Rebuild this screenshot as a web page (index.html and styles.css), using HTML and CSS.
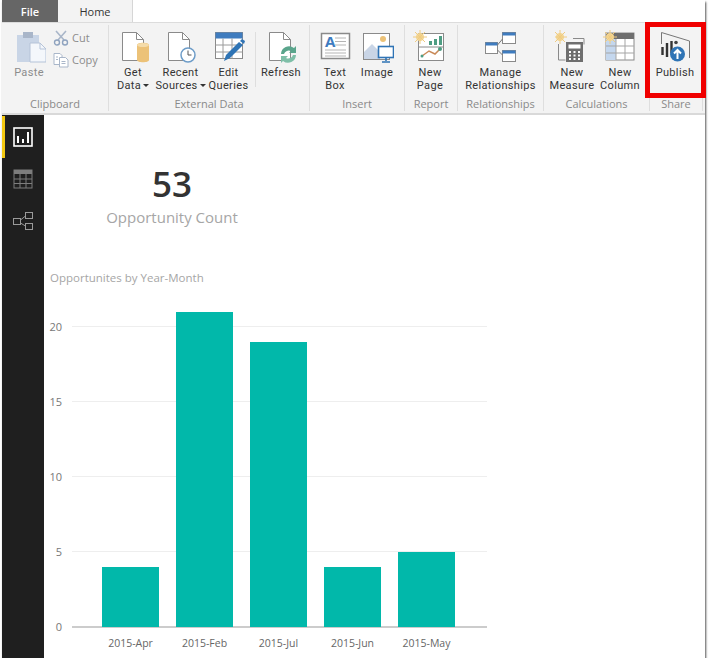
FILE: index.html
```html
<!DOCTYPE html>
<html lang="en">
<head>
  <meta charset="UTF-8" />
  <title>Power BI Desktop - Publish</title>
  <link rel="stylesheet" href="styles.css">
</head>
<body>
  <div class="window">
    <div class="tabs">
      <div class="tab tab-file">File</div>
      <div class="tab tab-home">Home</div>
    </div>

    <div class="ribbon">
      <div class="group group-clipboard">
        <div class="group-items">
          <div class="item item-paste disabled">
            <svg class="icon" viewBox="-4 -1 34 34">
              <rect x="1" y="4" width="22" height="27" fill="#c9d5e6"/>
              <rect x="7" y="1" width="10" height="6" fill="#a9b6c9"/>
              <path d="M14 12h10l6 6v13H14z" fill="#f4f7fb" stroke="#b5c3d8"/>
              <path d="M24 12v6h6" fill="none" stroke="#b5c3d8"/>
            </svg>
            <span class="label">Paste</span>
          </div>
          <div class="small-items">
            <div class="small-item disabled">
              <svg class="small-icon" viewBox="0 0 16 16">
                <path d="M3 1l8 9M13 1l-8 9" fill="none" stroke="#a9b6c9" stroke-width="1.6"/>
                <circle cx="4" cy="12.500" r="2.500" fill="none" stroke="#8fa3bf" stroke-width="1.4"/>
                <circle cx="12" cy="12.500" r="2.500" fill="none" stroke="#8fa3bf" stroke-width="1.4"/>
              </svg>
              <span>Cut</span>
            </div>
            <div class="small-item disabled">
              <svg class="small-icon" viewBox="0 0 16 16">
                <path d="M1 1.500h6l2 2v9H1z" fill="#fff" stroke="#a9b6c9"/>
                <path d="M6.500 5.500h6l2.500 2.500v7H6.500z" fill="#fff" stroke="#a9b6c9"/>
                <path d="M3 5h2M3 7.500h2M8.500 9.500h4M8.500 11.500h4" stroke="#a9b6c9"/>
              </svg>
              <span>Copy</span>
            </div>
          </div>
        </div>
        <div class="group-name">Clipboard</div>
      </div>

      <div class="group group-external">
        <div class="group-items">
          <div class="item item-getdata">
            <svg class="icon" viewBox="-2 0 34 34">
              <path d="M4.500 2.500h14l7 7v21h-21z" fill="#fff" stroke="#8a8a8a"/>
              <path d="M18.500 2.500v7h7" fill="none" stroke="#8a8a8a"/>
              <path d="M19 15c0-3 12-3 12 0v15c0 3-12 3-12 0z" fill="#ecc278"/>
              <ellipse cx="25" cy="15" rx="6" ry="2" fill="#f5dcaa"/>
            </svg>
            <span class="label">Get<br>Data<i class="caret"></i></span>
          </div>
          <div class="item item-recent">
            <svg class="icon" viewBox="-1 0 34 34">
              <path d="M3.500 2.500h14l7 7v21h-21z" fill="#fff" stroke="#8a8a8a"/>
              <path d="M17.500 2.500v7h7" fill="none" stroke="#8a8a8a"/>
              <circle cx="23" cy="25" r="7" fill="#fff" stroke="#6d9cc8" stroke-width="1.500"/>
              <path d="M23 20.500V25h3.500" fill="none" stroke="#555"/>
            </svg>
            <span class="label">Recent<br>Sources<i class="caret"></i></span>
          </div>
          <div class="item item-queries">
            <svg class="icon" viewBox="-1 0 34 34">
              <rect x="2.500" y="2.500" width="27" height="26" fill="#fff" stroke="#8a8a8a"/>
              <rect x="2.500" y="2.500" width="27" height="6" fill="#3f7cbf"/>
              <path d="M2.500 15h27M2.500 22h27M10 8.500v20M19 8.500v20" stroke="#9a9a9a"/>
              <path d="M11 31l2-6 13-13 4 3-13 13z" fill="#2f74b5"/>
              <path d="M27 11l2-2 3 2-1 3z" fill="#2f74b5"/>
            </svg>
            <span class="label">Edit<br>Queries</span>
          </div>
          <div class="mini-sep"></div>
          <div class="item item-refresh">
            <svg class="icon" viewBox="0 0 34 34">
              <path d="M5.500 2.500h14l7 7v21h-21z" fill="#fff" stroke="#8a8a8a"/>
              <path d="M19.500 2.500v7h7" fill="none" stroke="#8a8a8a"/>
              <path d="M17 24a8 8 0 0 1 13-6l2-2v7h-7l2-2a5 5 0 0 0-7 3z" fill="#5aa58c"/>
              <path d="M32 25a8 8 0 0 1-13 6l-2 2v-7h7l-2 2a5 5 0 0 0 7-3z" fill="#7fbfa8"/>
            </svg>
            <span class="label">Refresh</span>
          </div>
        </div>
        <div class="group-name">External Data</div>
      </div>

      <div class="group group-insert">
        <div class="group-items">
          <div class="item item-textbox">
            <svg class="icon" viewBox="-1 0 34 34">
              <rect x="2.500" y="3.500" width="28" height="25" fill="#fff" stroke="#8a8a8a" stroke-width="1.500"/>
              <text x="6" y="17" class="svg-letter">A</text>
              <path d="M16 8h11M16 11.500h11M16 15h11M6 20h21M6 23h21M6 26h21" stroke="#b5b5b5"/>
            </svg>
            <span class="label">Text<br>Box</span>
          </div>
          <div class="item item-image">
            <svg class="icon" viewBox="-2 0 34 34">
              <rect x="1.500" y="3.500" width="26" height="26" fill="#fff" stroke="#8a8a8a"/>
              <circle cx="21" cy="9" r="3" fill="#ecc278"/>
              <path d="M2 29V22l8-8 8 8v7z" fill="#c9d5e6"/>
              <rect x="16.500" y="16.500" width="15" height="11" fill="#fff" stroke="#2f74b5" stroke-width="1.600"/>
              <path d="M24 28v3M20 32h8" stroke="#2f74b5" stroke-width="1.600"/>
            </svg>
            <span class="label">Image</span>
          </div>
        </div>
        <div class="group-name">Insert</div>
      </div>

      <div class="group group-report">
        <div class="group-items">
          <div class="item item-newpage">
            <svg class="icon" viewBox="0 0 34 34">
              <rect x="5.500" y="3.500" width="25" height="27" fill="#fff" stroke="#8a8a8a"/>
              <path d="M6 17h24" stroke="#8a8a8a"/>
              <path d="M16 15v-4h3v4zM21 15V9h3v6zM26 15V6h3v9z" fill="#4e9d83"/>
              <path d="M9 26l7-5 6 3 6-6" fill="none" stroke="#c98a58" stroke-width="1.500"/>
              <circle cx="27" cy="19" r="2" fill="#4e9d83"/>
              <circle cx="9" cy="26" r="1.500" fill="#4e9d83"/>
              <circle cx="7" cy="7" r="4" fill="#f3d795"/>
              <path d="M7 0v14M0 7h14M2 2l10 10M12 2L2 12" stroke="#f0cb80"/>
            </svg>
            <span class="label">New<br>Page</span>
          </div>
        </div>
        <div class="group-name">Report</div>
      </div>

      <div class="group group-relations">
        <div class="group-items">
          <div class="item item-manage">
            <svg class="icon" viewBox="0 0 34 34">
              <rect x="1.500" y="12.500" width="12" height="11" fill="#fff" stroke="#8a8a8a"/>
              <rect x="1.500" y="12.500" width="12" height="3" fill="#3f7cbf"/>
              <rect x="18.500" y="2.500" width="13" height="11" fill="#fff" stroke="#8a8a8a"/>
              <rect x="18.500" y="2.500" width="13" height="3" fill="#3f7cbf"/>
              <rect x="18.500" y="20.500" width="13" height="11" fill="#fff" stroke="#8a8a8a"/>
              <rect x="18.500" y="20.500" width="13" height="3" fill="#3f7cbf"/>
              <path d="M13.500 15l5-6M13.500 20l5 5" stroke="#777"/>
            </svg>
            <span class="label">Manage<br>Relationships</span>
          </div>
        </div>
        <div class="group-name">Relationships</div>
      </div>

      <div class="group group-calc">
        <div class="group-items">
          <div class="item item-measure">
            <svg class="icon" viewBox="2 0 34 34">
              <path d="M5.500 14v16h7M20 8.500h11v6" fill="none" stroke="#8a8a8a"/>
              <rect x="13" y="12" width="17" height="20" fill="#6e6e6e"/>
              <rect x="15.500" y="14.500" width="12" height="4" fill="#fff"/>
              <path d="M16 22h2M20.500 22h2M25 22h2M16 25.500h2M20.500 25.500h2M25 25.500h2M16 29h2M20.500 29h2M25 29h2" stroke="#fff" stroke-width="2"/>
              <circle cx="7" cy="7" r="4" fill="#f3d795"/>
              <path d="M7 0v14M0 7h14M2 2l10 10M12 2L2 12" stroke="#f0cb80"/>
            </svg>
            <span class="label">New<br>Measure</span>
          </div>
          <div class="item item-column">
            <svg class="icon" viewBox="0 0 34 34">
              <rect x="3" y="3" width="28" height="27" fill="#fff" stroke="#8a8a8a"/>
              <rect x="3" y="3" width="28" height="6" fill="#6e6e6e"/>
              <rect x="3" y="9" width="10" height="21" fill="#c4d7ee"/>
              <path d="M3 16h28M3 23h28M13 9v21M22 9v21" stroke="#a5a5a5"/>
              <circle cx="7" cy="7" r="4" fill="#f3d795"/>
              <path d="M7 0v14M0 7h14M2 2l10 10M12 2L2 12" stroke="#f0cb80"/>
            </svg>
            <span class="label">New<br>Column</span>
          </div>
        </div>
        <div class="group-name">Calculations</div>
      </div>

      <div class="group group-share">
        <div class="group-items">
          <div class="item item-publish">
            <svg class="icon" viewBox="0 0 34 34">
              <path d="M3.500 14V2.500l28 8.500v17" fill="none" stroke="#777"/>
              <path d="M4.500 17v8M9 13v14M13.500 11v12" stroke="#333" stroke-width="2.400"/>
              <circle cx="18" cy="12.500" r="1.800" fill="#444"/>
              <circle cx="19.500" cy="24" r="7.500" fill="#2f74b5"/>
              <path d="M19.500 29v-9M16 23.500l3.500-3.500 3.500 3.500" fill="none" stroke="#fff" stroke-width="2"/>
            </svg>
            <span class="label">Publish</span>
          </div>
        </div>
        <div class="group-name">Share</div>
      </div>

      <div class="highlight"></div>
    </div>

    <div class="workspace">
      <div class="sidebar">
        <div class="side-btn active">
          <svg class="side-icon" viewBox="0 0 20 20">
            <rect x="1" y="1" width="18" height="18" fill="none" stroke="#fff" stroke-width="1.600"/>
            <path d="M5 16V9M10 16v-4M15 16V5" stroke="#fff" stroke-width="2"/>
          </svg>
        </div>
        <div class="side-btn">
          <svg class="side-icon" viewBox="0 0 20 20">
            <rect x="1" y="1" width="18" height="18" fill="none" stroke="#7d7d7d"/>
            <rect x="1" y="1" width="18" height="4" fill="#7d7d7d"/>
            <path d="M1 10h18M1 14.500h18M7 5v14M13 5v14" stroke="#7d7d7d"/>
          </svg>
        </div>
        <div class="side-btn">
          <svg class="side-icon" viewBox="0 0 20 20">
            <rect x="0.500" y="7.500" width="7" height="6" fill="none" stroke="#9a9a9a"/>
            <rect x="12.500" y="1.500" width="7" height="6" fill="none" stroke="#9a9a9a"/>
            <rect x="12.500" y="12.500" width="7" height="6" fill="none" stroke="#9a9a9a"/>
            <path d="M7.500 9l5-4M7.500 12l5 3" stroke="#9a9a9a"/>
          </svg>
        </div>
      </div>

      <div class="canvas">
        <div class="kpi">
          <div class="kpi-value">53</div>
          <div class="kpi-name">Opportunity Count</div>
        </div>

        <div class="chart">
          <div class="chart-title">Opportunites by Year-Month</div>
          <div class="plot">
            <div class="gridline" style="bottom: 300px"><span>20</span></div>
            <div class="gridline" style="bottom: 225px"><span>15</span></div>
            <div class="gridline" style="bottom: 150px"><span>10</span></div>
            <div class="gridline" style="bottom: 75px"><span>5</span></div>
            <div class="gridline gridline-zero" style="bottom: -1px"><span>0</span></div>
            <div class="bar" style="height: 60px"></div>
            <div class="bar" style="height: 315px"></div>
            <div class="bar" style="height: 285px"></div>
            <div class="bar" style="height: 60px"></div>
            <div class="bar" style="height: 75px"></div>
          </div>
          <div class="x-axis">
            <span>2015-Apr</span>
            <span>2015-Feb</span>
            <span>2015-Jul</span>
            <span>2015-Jun</span>
            <span>2015-May</span>
          </div>
        </div>
      </div>
    </div>
  </div>
</body>
</html>
```

FILE: styles.css
```css
* {
  box-sizing: border-box;
  font-family: "Open Sans", "Noto Sans", sans-serif;
}

body {
  margin: 0;
  background-color: #fff;
  overflow: hidden;
}

.window {
  width: 703px;
  height: 658px;
  margin-left: 2px;
  display: flex;
  flex-direction: column;
  background-color: #fff;
  box-shadow: 1px 2px 2px #555;
}

/* Tabs */
.tabs {
  display: flex;
  height: 23px;
  background-color: #fff;
}

.tab {
  height: 23px;
  font-size: 11px;
  line-height: 23px;
  text-align: center;
}

.tab-file {
  width: 56px;
  background-color: #666;
  color: #fff;
  font-weight: 600;
}

.tab-home {
  width: 75px;
  color: #333;
  background-color: #f3f3f3;
  border-right: 1px solid #d6d6d6;
}

/* Ribbon */
.ribbon {
  position: relative;
  display: flex;
  height: 93px;
  flex-shrink: 0;
  background-color: #f3f3f3;
  border-top: 1px solid #dcdcdc;
  border-bottom: 2px solid #d9d9d9;
  margin-top: -1px;
}

.group {
  display: flex;
  flex-direction: column;
  justify-content: space-between;
  height: 86px;
  margin-top: 2px;
  border-right: 1px solid #dedede;
}

.group-items {
  display: flex;
  padding-top: 5px;
}

.group-name {
  height: 14px;
  font-size: 11px;
  line-height: 14px;
  text-align: center;
  color: #8a8a8a;
}

.group-clipboard { width: 107px; }
.group-external { width: 201px; }
.group-insert { width: 95px; }
.group-report { width: 53px; }
.group-relations { width: 86px; }
.group-calc { width: 106px; }
.group-share { width: 53px; }

.item {
  display: flex;
  flex-direction: column;
  align-items: center;
}

.icon {
  width: 34px;
  height: 34px;
  margin-bottom: 2px;
  flex-shrink: 0;
}

/* Roboto keeps two-line labels from touching at this line height */
.label {
  font-family: Roboto, "Open Sans", sans-serif;
  font-size: 11px;
  letter-spacing: 0.35px;
  line-height: 13px;
  color: #333;
  text-align: center;
  white-space: nowrap;
}

.disabled .label,
.disabled span {
  color: #8c8c8c;
}

.caret {
  display: inline-block;
  margin-left: 2px;
  vertical-align: 2px;
  border-left: 3px solid transparent;
  border-right: 3px solid transparent;
  border-top: 3px solid #333;
}

.item-paste { width: 54px; }
.item-getdata { width: 48px; }
.item-recent { width: 47px; }
.item-queries { width: 49px; }
.item-refresh { width: 50px; }
.item-textbox { width: 50px; }
.item-image { width: 34px; }
.item-newpage { width: 50px; }
.item-manage { width: 85px; }
.item-measure { width: 56px; }
.item-column { width: 40px; }
.item-publish { width: 50px; }

.small-items {
  display: flex;
  flex-direction: column;
  gap: 6px;
  margin-left: -3px;
}

.small-item {
  display: flex;
  align-items: center;
  gap: 3px;
  font-size: 11px;
  line-height: 16px;
}

.small-icon {
  width: 16px;
  height: 16px;
}

.mini-sep {
  width: 1px;
  height: 55px;
  margin: 2px 0 0 2px;
  background-color: #dedede;
}

.svg-letter {
  font-size: 15px;
  font-weight: 700;
  fill: #3f7cbf;
}

.highlight {
  position: absolute;
  left: 643px;
  top: -1px;
  width: 61px;
  height: 76px;
  border: 5px solid #f00000;
}

/* Left rail */
.workspace {
  display: flex;
  flex: 1;
  min-height: 0;
}

.sidebar {
  width: 42px;
  flex-shrink: 0;
  padding-top: 1px;
  background-color: #1f1f1f;
}

.side-btn {
  height: 42px;
  display: flex;
  align-items: center;
  justify-content: center;
  border-left: 3px solid transparent;
  padding-right: 4px;
}

.side-btn.active {
  border-left-color: #f2c811;
}

.side-icon {
  width: 20px;
  height: 20px;
}

/* Report canvas */
.canvas {
  flex: 1;
  padding-top: 47px;
}

.kpi {
  width: 256px;
  text-align: center;
}

.kpi-value {
  font-size: 35px;
  font-weight: 600;
  line-height: 44px;
  color: #333;
}

.kpi-name {
  font-size: 15px;
  line-height: 23px;
  color: #a6a6a6;
}

.chart {
  margin-top: 40px;
  padding-left: 6px;
}

.chart-title {
  font-size: 11.500px;
  line-height: 18px;
  color: #a6a6a6;
}

.plot {
  position: relative;
  display: flex;
  align-items: flex-end;
  gap: 17px;
  width: 415px;
  height: 315px;
  margin: 25px 0 0 22px;
  padding-left: 30px;
}

.gridline {
  position: absolute;
  left: 0;
  right: 0;
  height: 1px;
  background-color: #eee;
}

.gridline-zero {
  height: 2px;
  background-color: #ccc;
}

.gridline span {
  position: absolute;
  right: 425px;
  top: -7px;
  font-size: 11px;
  line-height: 16px;
  color: #777;
}

.bar {
  position: relative;
  width: 57px;
  background-color: #01b8aa;
}

.x-axis {
  display: flex;
  gap: 17px;
  margin: 8px 0 0 52px;
}

.x-axis span {
  width: 57px;
  font-size: 10.500px;
  line-height: 16px;
  text-align: center;
  white-space: nowrap;
  color: #666;
}
```
